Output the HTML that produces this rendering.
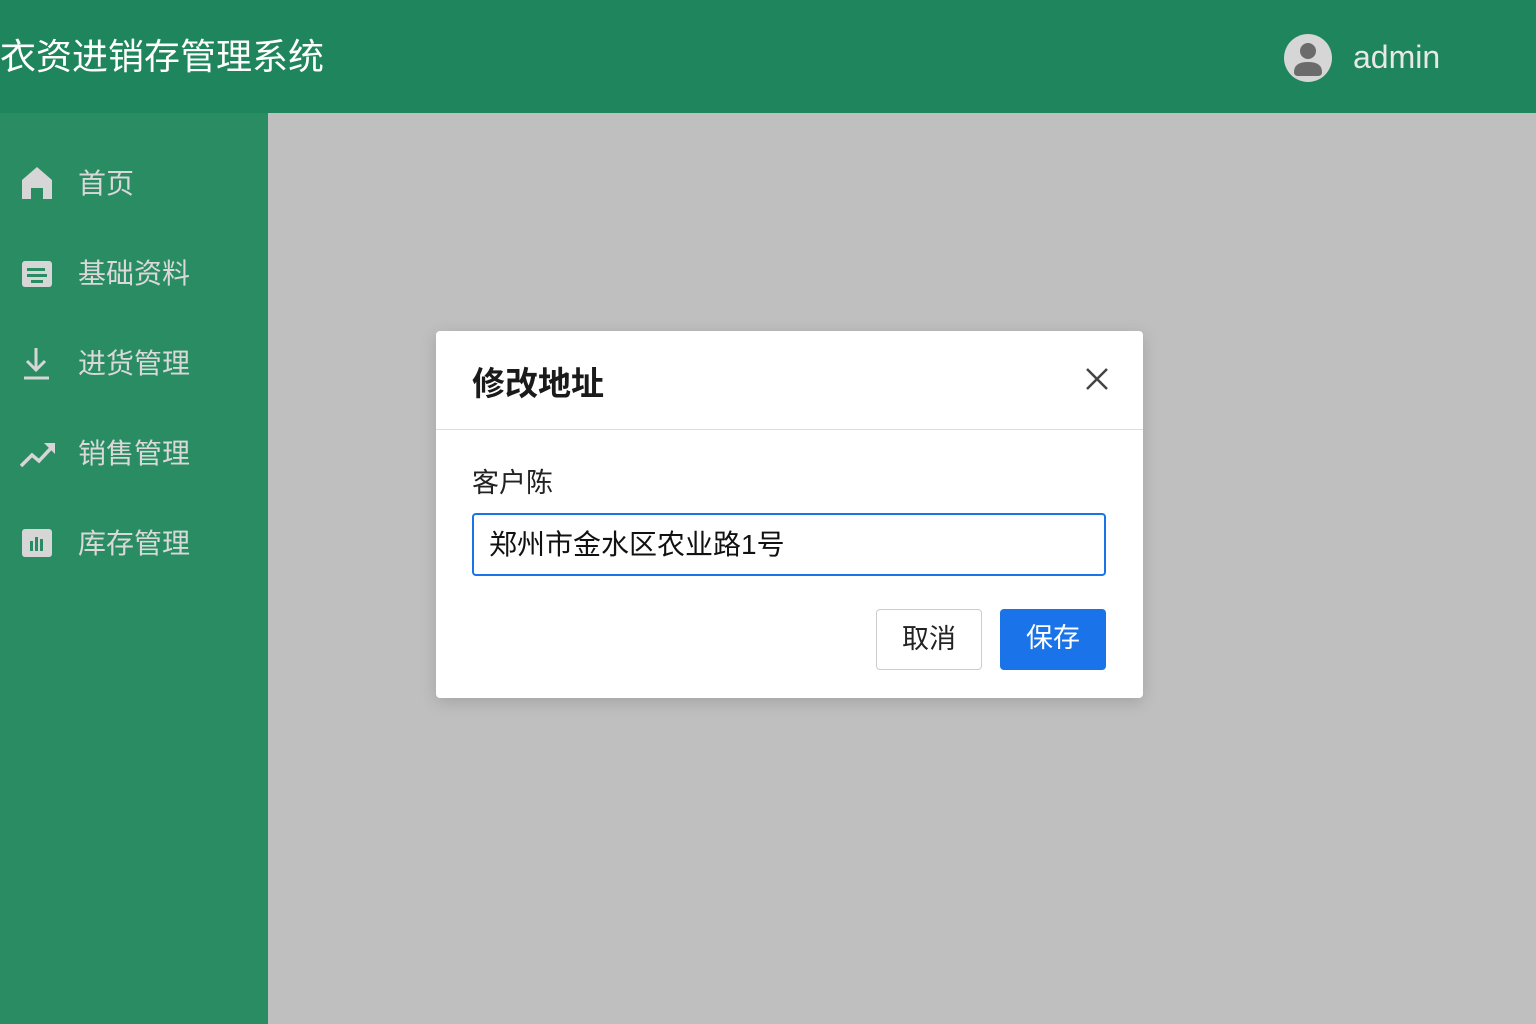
<!DOCTYPE html>
<html><head><meta charset="utf-8"><style>
*{margin:0;padding:0;box-sizing:border-box}
body{width:1536px;height:1024px;overflow:hidden;background:#bfbfbf;font-family:"Liberation Sans","Noto Sans CJK SC",sans-serif;position:relative}
.top{position:absolute;left:0;top:0;width:1536px;height:113px;background:#1f855c}
.title{position:absolute;left:0;top:34px;font-size:36px;color:#fff;letter-spacing:0;line-height:46px}
.side{position:absolute;left:0;top:113px;width:268px;height:911px;background:#2a8c63}
.item{position:absolute;left:0;height:40px;width:268px;color:#d9d9d9;font-size:28px;line-height:40px}
.item span{position:absolute;left:78px;top:2px}
.item svg{position:absolute;left:20px;top:4px}
.dlg{position:absolute;left:436px;top:331px;width:707px;height:367px;background:#fff;border-radius:4px;box-shadow:0 4px 16px rgba(0,0,0,.15)}
.hd{height:99px;border-bottom:1px solid #ddd;position:relative}
.hd b{position:absolute;left:36px;top:26px;font-size:33px;color:#1a1a1a}
.lbl{position:absolute;left:36px;top:130px;font-size:27px;color:#222}
.inp{position:absolute;left:36px;top:182px;width:634px;height:63px;border:2px solid #1a73e8;border-radius:4px;font-size:28px;line-height:59px;padding-left:15px;color:#111}
.btn{position:absolute;top:278px;height:61px;border-radius:4px;font-size:27px;line-height:59px;text-align:center}
</style></head><body>
<div class="top"><div class="title">衣资进销存管理系统</div>
<svg style="position:absolute;left:1284px;top:34px" width="48" height="48" viewBox="0 0 48 48"><circle cx="24" cy="24" r="24" fill="#d6d6d6"/><circle cx="24" cy="17" r="8" fill="#6b6b6b"/><path d="M10 38 Q10 28 24 28 Q38 28 38 38 Q38 42 34 42 H14 Q10 42 10 38Z" fill="#6b6b6b"/></svg>
<div style="position:absolute;left:1353px;top:39px;font-size:32px;color:#e8e8e8">admin</div></div>
<div class="side">
<div class="item" style="top:49px"><svg width="34" height="34" viewBox="0 0 34 34"><path d="M2 14 L17 1 L32 14 V33 H23 V22 H11 V33 H2Z" fill="#d6d6d6"/></svg><span>首页</span></div>
<div class="item" style="top:139px"><svg width="34" height="34" viewBox="0 0 34 34"><rect x="2" y="5" width="30" height="26" rx="3" fill="#d6d6d6"/><rect x="7" y="12" width="18" height="3" fill="#2a8c63"/><rect x="7" y="18" width="20" height="3" fill="#2a8c63"/><rect x="11" y="24" width="12" height="3" fill="#2a8c63"/></svg><span>基础资料</span></div>
<div class="item" style="top:229px"><svg width="34" height="34" viewBox="0 0 34 34"><path d="M16 2 V24 M7 15 L16 24 L25 15 M4 32 H29" stroke="#d6d6d6" stroke-width="3" fill="none"/></svg><span>进货管理</span></div>
<div class="item" style="top:319px"><svg width="38" height="34" viewBox="0 0 38 34"><path d="M1 30 L12 19 L19 25 L33 10" stroke="#d6d6d6" stroke-width="3.5" fill="none"/><path d="M24 7 H35 V18Z" fill="#d6d6d6"/></svg><span>销售管理</span></div>
<div class="item" style="top:409px"><svg width="34" height="34" viewBox="0 0 34 34"><rect x="2" y="3" width="30" height="28" rx="3" fill="#d6d6d6"/><rect x="10" y="15" width="3" height="10" fill="#2a8c63"/><rect x="15" y="11" width="3" height="14" fill="#2a8c63"/><rect x="20" y="13" width="3" height="12" fill="#2a8c63"/></svg><span>库存管理</span></div>
</div>
<div class="dlg">
<div class="hd"><b>修改地址</b><svg style="position:absolute;left:650px;top:37px" width="22" height="22" viewBox="0 0 22 22"><path d="M1 1 L21 21 M21 1 L1 21" stroke="#444" stroke-width="2.5"/></svg></div>
<div class="lbl">客户陈</div>
<div class="inp">郑州市金水区农业路1号</div>
<div class="btn" style="left:440px;width:106px;border:1px solid #ccc;color:#222">取消</div>
<div class="btn" style="left:564px;width:106px;background:#1a73e8;color:#fff">保存</div>
</div>
</body></html>
